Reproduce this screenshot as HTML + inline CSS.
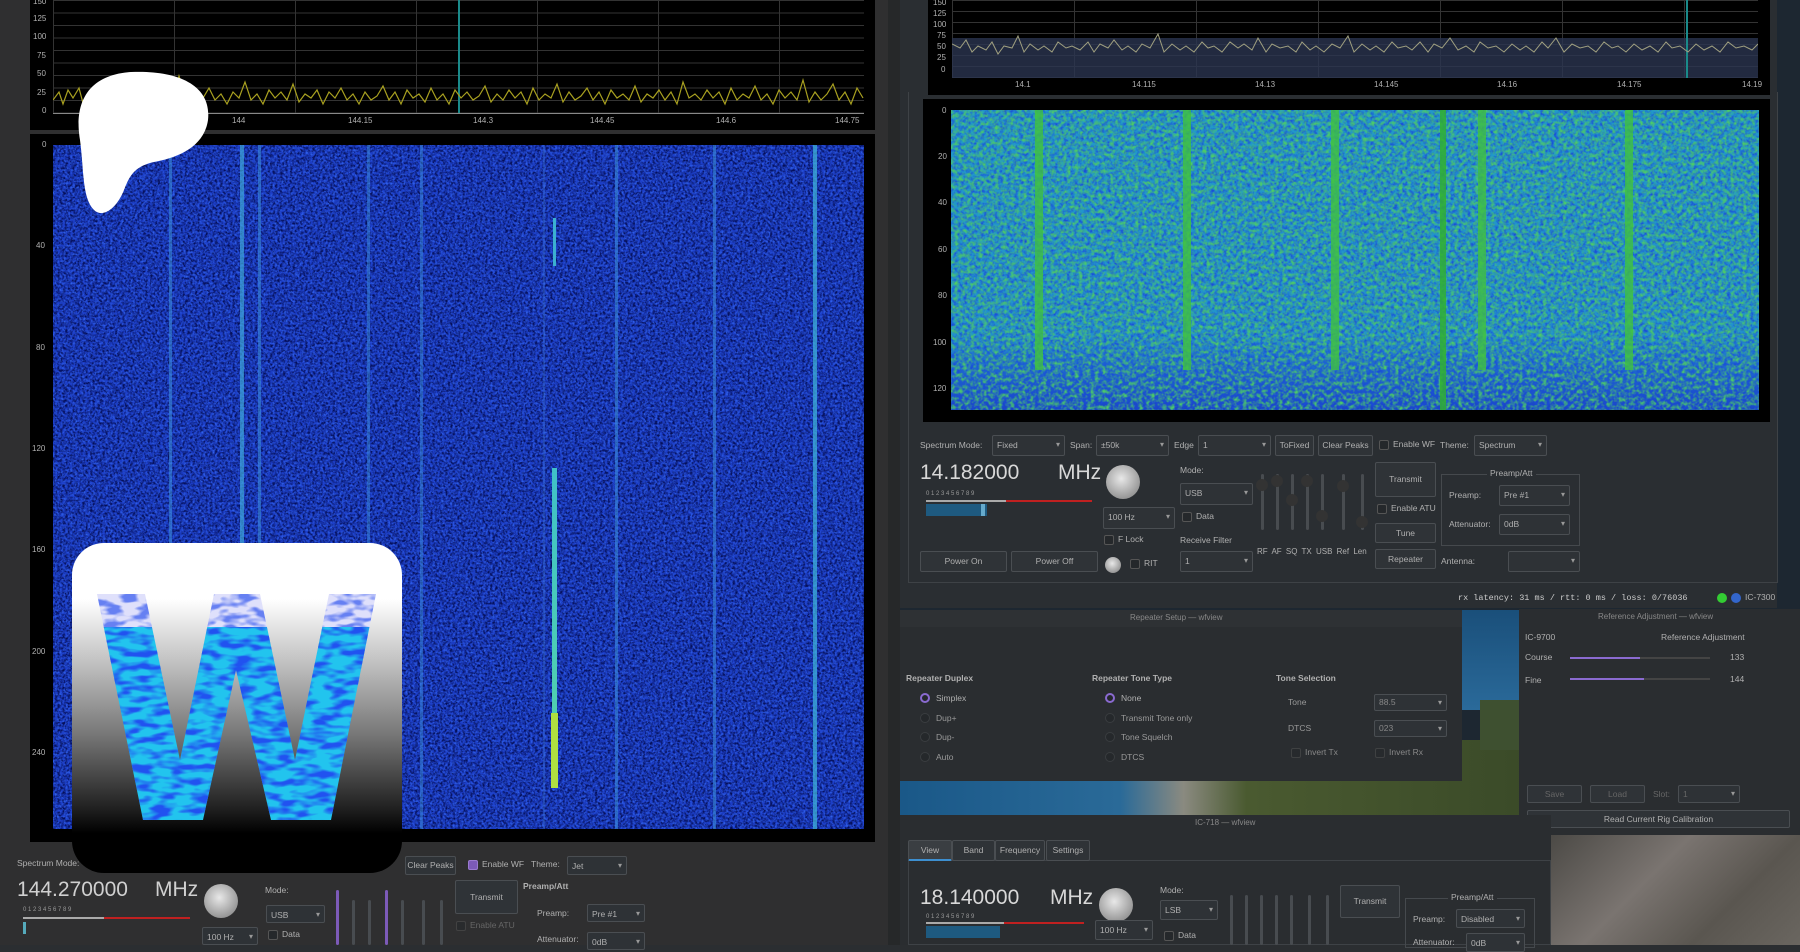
<!DOCTYPE html>
<html><head><meta charset="utf-8">
<style>
*{margin:0;padding:0;box-sizing:border-box}
body{width:1800px;height:945px;overflow:hidden;background:#2b2e31;font-family:"Liberation Sans",sans-serif;color:#c8c8c8;position:relative;font-size:9px}
.a{position:absolute}
.t{position:absolute;white-space:nowrap;font-size:9px;color:#b0b0b0}
.cb{position:absolute;border:1px solid #4a4e52;background:#2e3236;border-radius:2px;color:#b0b0b0;font-size:8.5px;padding-left:4px;line-height:18px;white-space:nowrap}
.cb:after{content:"▾";position:absolute;right:4px;top:0;font-size:8px;color:#999}
.bt{position:absolute;border:1px solid #4a4e52;background:#2f3337;border-radius:2px;color:#b0b0b0;font-size:8.5px;text-align:center;white-space:nowrap}
.chk{position:absolute;width:10px;height:10px;border:1px solid #555;background:#25282b;border-radius:2px}
.rad{position:absolute;width:10px;height:10px;border-radius:50%;background:#25282b;border:1px solid #3a3d40}
.sl{position:absolute;width:3px;background:#484c50;border-radius:2px}
.kn{position:absolute;border-radius:50%;background:radial-gradient(circle at 45% 40%,#e8e8e8,#999 70%,#777)}
.grid{background-image:linear-gradient(#333 1px,transparent 1px),linear-gradient(90deg,#333 1px,transparent 1px)}
filter{color-interpolation-filters:sRGB}
</style></head><body>
<svg width="0" height="0" style="position:absolute">
<filter id="nc1" x="0" y="0" width="100%" height="100%" color-interpolation-filters="sRGB"><feTurbulence type="fractalNoise" baseFrequency="0.3" numOctaves="2" seed="7"/><feColorMatrix type="matrix" values="0 0 0 0 0.1  0 0 0 0 0.3  0 0 0 0 0.85  2.2 0 0 0 -0.8"/></filter>
<filter id="nc2" x="0" y="0" width="100%" height="100%" color-interpolation-filters="sRGB"><feTurbulence type="fractalNoise" baseFrequency="0.25" numOctaves="2" seed="11"/><feColorMatrix type="matrix" values="0 0 0 0 0.3  0 0 0 0 0.8  0 0 0 0 0.4  2.2 0 0 0 -0.85"/></filter>
<filter id="nb" x="0" y="0" width="100%" height="100%" color-interpolation-filters="sRGB"><feTurbulence type="fractalNoise" baseFrequency="0.4" numOctaves="2" seed="3"/><feColorMatrix type="matrix" values="0 0 0 0 0.02  0 0 0 0 0.06  0 0 0 0 0.35  2.6 0 0 0 -0.9"/></filter>
<filter id="nb2" x="0" y="0" width="100%" height="100%" color-interpolation-filters="sRGB"><feTurbulence type="fractalNoise" baseFrequency="0.45" numOctaves="2" seed="21"/><feColorMatrix type="matrix" values="0 0 0 0 0.2  0 0 0 0 0.4  0 0 0 0 0.95  2.4 0 0 0 -1.1"/></filter>
</svg>

<!-- LEFT WINDOW -->
<div class="a" style="left:0;top:0;width:892px;height:945px;background:#2f2f30"></div>
<div class="a" style="left:888px;top:0;width:12px;height:945px;background:#262829"></div>
<div class="a" style="left:30px;top:0;width:845px;height:130px;background:#000"></div>
<div class="a grid" style="left:53px;top:0;width:811px;height:113px;background-size:100% 12.5px,121px 100%"></div>
<div class="a" style="left:458px;top:0;width:2px;height:113px;background:#1a8a8a"></div>
<svg class="a" style="left:53px;top:70px" width="811" height="44"><polyline fill="none" stroke="#a8a020" stroke-width="1.2" points="0,30 6,22 10,34 15,20 20,28 26,18 30,33 36,24 42,30 48,20 54,32 60,26 66,14 72,30 78,22 84,34 90,24 96,28 102,16 108,32 114,24 120,30 126,6 132,26 138,34 144,20 150,28 156,18 162,30 168,24 174,34 180,22 186,28 192,12 198,30 204,24 210,34 216,20 222,28 228,22 234,30 240,14 246,32 252,24 258,28 264,20 270,34 276,22 282,28 288,18 294,30 300,24 306,34 312,22 318,30 324,26 330,16 336,30 342,22 348,34 354,20 360,28 366,24 372,32 378,18 384,30 390,24 396,34 402,20 408,28 414,22 420,30 426,26 432,16 438,32 444,24 450,30 456,20 462,28 468,22 474,34 480,18 486,30 492,24 498,28 504,14 510,32 516,22 522,30 528,26 534,18 540,30 546,22 552,34 558,20 564,28 570,24 576,30 582,16 588,32 594,24 600,28 606,20 612,30 618,22 624,34 630,12 636,28 642,24 648,30 654,20 660,28 666,22 672,34 678,18 684,30 690,24 696,28 702,16 708,30 714,24 720,34 726,20 732,28 738,22 744,30 750,10 756,32 762,22 768,30 774,24 780,14 786,30 792,22 798,34 804,18 810,28"/></svg>
<div class="a" style="left:53px;top:113px;width:811px;height:1px;background:#888"></div>
<div class="t" style="left:33px;top:-3px;font-size:8px">150</div><div class="t" style="left:33px;top:14px;font-size:8px">125</div><div class="t" style="left:33px;top:32px;font-size:8px">100</div><div class="t" style="left:37px;top:51px;font-size:8px">75</div><div class="t" style="left:37px;top:69px;font-size:8px">50</div><div class="t" style="left:37px;top:88px;font-size:8px">25</div><div class="t" style="left:42px;top:106px;font-size:8px">0</div>
<div class="t" style="left:232px;top:116px;font-size:8px">144</div><div class="t" style="left:348px;top:116px;font-size:8px">144.15</div><div class="t" style="left:473px;top:116px;font-size:8px">144.3</div><div class="t" style="left:590px;top:116px;font-size:8px">144.45</div><div class="t" style="left:716px;top:116px;font-size:8px">144.6</div><div class="t" style="left:835px;top:116px;font-size:8px">144.75</div>
<div class="a" style="left:30px;top:134px;width:845px;height:708px;background:#000"></div>
<div class="a" style="left:53px;top:145px;width:811px;height:684px;background:#1c3ec8;overflow:hidden">
<svg width="811" height="684" style="position:absolute;left:0;top:0"><rect width="811" height="684" fill="#000" filter="url(#nb)"/><rect width="811" height="684" fill="#000" filter="url(#nb2)"/></svg>
<div class="a" style="left:116px;top:0;width:3px;height:684px;background:#3a8ad8;opacity:.6"></div>
<div class="a" style="left:187px;top:0;width:4px;height:684px;background:#3fa6d8;opacity:.7"></div>
<div class="a" style="left:205px;top:0;width:3px;height:684px;background:#3a8ad8;opacity:.6"></div>
<div class="a" style="left:314px;top:0;width:3px;height:684px;background:#3a8ad8;opacity:.5"></div>
<div class="a" style="left:367px;top:0;width:3px;height:684px;background:#3a8ad8;opacity:.5"></div>
<div class="a" style="left:490px;top:0;width:2px;height:684px;background:#3a70d8;opacity:.4"></div>
<div class="a" style="left:562px;top:0;width:3px;height:684px;background:#3a8ad8;opacity:.6"></div>
<div class="a" style="left:660px;top:0;width:3px;height:684px;background:#3a8ad8;opacity:.6"></div>
<div class="a" style="left:760px;top:0;width:4px;height:684px;background:#3fb0d8;opacity:.75"></div>
<div class="a" style="left:500px;top:73px;width:3px;height:48px;background:#3cb0d0"></div>
<div class="a" style="left:499px;top:323px;width:5px;height:245px;background:linear-gradient(#40c0c8,#50d0b0)"></div>
<div class="a" style="left:498px;top:568px;width:7px;height:75px;background:#b0e040"></div>
</div>
<div class="t" style="left:42px;top:140px;font-size:8px">0</div><div class="t" style="left:36px;top:241px;font-size:8px">40</div><div class="t" style="left:36px;top:343px;font-size:8px">80</div><div class="t" style="left:32px;top:444px;font-size:8px">120</div><div class="t" style="left:32px;top:545px;font-size:8px">160</div><div class="t" style="left:32px;top:647px;font-size:8px">200</div><div class="t" style="left:32px;top:748px;font-size:8px">240</div>
<!-- left controls -->
<div class="t" style="left:17px;top:858px;font-size:8.5px">Spectrum Mode:</div>
<div class="bt" style="left:405px;top:856px;width:51px;height:19px;line-height:17px">Clear Peaks</div>
<div class="chk" style="left:468px;top:860px;background:#7c5ab8;border-color:#9a7ad0"></div>
<div class="t" style="left:482px;top:859px;font-size:8.5px">Enable WF</div>
<div class="t" style="left:531px;top:859px;font-size:8.5px">Theme:</div>
<div class="cb" style="left:567px;top:856px;width:60px;height:19px">Jet</div>
<div class="t" style="left:17px;top:878px;font-size:21px;color:#d0d0d0">144.270000</div>
<div class="t" style="left:155px;top:878px;font-size:21px;color:#d0d0d0">MHz</div>
<div class="a" style="left:23px;top:917px;width:81px;height:2px;background:#aaa"></div>
<div class="a" style="left:104px;top:917px;width:86px;height:2px;background:#c02020"></div>
<div class="t" style="left:23px;top:907px;font-size:6px;color:#999">0 1 2 3 4 5 6 7 8 9</div>
<div class="a" style="left:23px;top:922px;width:3px;height:12px;background:#5ab"></div>
<div class="kn" style="left:204px;top:884px;width:34px;height:34px"></div>
<div class="cb" style="left:202px;top:927px;width:56px;height:18px">100 Hz</div>
<div class="t" style="left:265px;top:885px;font-size:8.5px">Mode:</div>
<div class="cb" style="left:266px;top:905px;width:59px;height:18px">USB</div>
<div class="chk" style="left:268px;top:930px"></div><div class="t" style="left:282px;top:929px;font-size:8.5px">Data</div>
<div class="sl" style="left:336px;top:890px;height:55px;background:#7c5ab8"></div>
<div class="sl" style="left:352px;top:900px;height:45px"></div>
<div class="sl" style="left:368px;top:900px;height:45px"></div>
<div class="sl" style="left:385px;top:890px;height:55px;background:#7c5ab8"></div>
<div class="sl" style="left:401px;top:900px;height:45px"></div>
<div class="sl" style="left:422px;top:900px;height:45px"></div>
<div class="sl" style="left:440px;top:900px;height:45px"></div>
<div class="bt" style="left:455px;top:880px;width:63px;height:34px;line-height:32px">Transmit</div>
<div class="chk" style="left:456px;top:921px;opacity:.5"></div><div class="t" style="left:470px;top:920px;font-size:8.5px;color:#666">Enable ATU</div>
<div class="t" style="left:523px;top:881px;font-size:8.5px;font-weight:bold">Preamp/Att</div>
<div class="t" style="left:537px;top:908px;font-size:8.5px">Preamp:</div>
<div class="cb" style="left:587px;top:904px;width:58px;height:18px">Pre #1</div>
<div class="t" style="left:537px;top:934px;font-size:8.5px">Attenuator:</div>
<div class="cb" style="left:587px;top:932px;width:58px;height:18px">0dB</div>

<!-- LOGOS -->
<svg class="a" style="left:76px;top:70px" width="136" height="148" viewBox="0 0 136 148"><path d="M4,70 C-2,35 10,5 55,2 C100,0 136,14 132,50 C128,78 100,88 78,92 C60,96 54,104 48,120 C40,140 26,148 18,140 C6,128 8,100 4,70Z" fill="#fff"/></svg>
<div class="a" style="left:72px;top:543px;width:330px;height:330px;border-radius:32px;background:linear-gradient(#fff 0%,#fff 17%,#bbb 38%,#777 58%,#222 80%,#000 88%);overflow:hidden">
<svg width="330" height="330" style="position:absolute;left:0;top:0">
<defs><clipPath id="wc"><polygon points="25,51 73,51 108,217 142,51 188,51 223,217 257,51 304,51 259,277 199,277 164,127 131,277 71,277"/></clipPath>
<filter id="wn" x="0" y="0" width="100%" height="100%" color-interpolation-filters="sRGB"><feTurbulence type="fractalNoise" baseFrequency="0.05 0.14" numOctaves="2" seed="5"/><feColorMatrix type="matrix" values="0 0 0 0 0.13  0 0 0 0 0.32  0 0 0 0 0.94  4 0 0 0 -1.7"/></filter>
<filter id="wn2" x="0" y="0" width="100%" height="100%" color-interpolation-filters="sRGB"><feTurbulence type="fractalNoise" baseFrequency="0.06 0.14" numOctaves="2" seed="9"/><feColorMatrix type="matrix" values="0 0 0 0 0.4  0 0 0 0 0.5  0 0 0 0 0.95  4 0 0 0 -1.7"/></filter></defs>
<g clip-path="url(#wc)"><rect x="0" y="51" width="330" height="33" fill="#dfe0fb"/><rect x="0" y="51" width="330" height="33" fill="#000" filter="url(#wn2)"/><rect x="0" y="84" width="330" height="200" fill="#22c4ee"/><rect x="0" y="84" width="330" height="200" fill="#000" filter="url(#wn)"/></g>
</svg></div>

<!-- RIGHT MAIN WINDOW -->
<div class="a" style="left:1777px;top:0;width:23px;height:610px;background:#1d2731"></div>
<div class="a" style="left:900px;top:0;width:877px;height:608px;background:#2a2e32"></div>
<div class="a" style="left:928px;top:0;width:842px;height:95px;background:#000"></div>
<div class="a grid" style="left:952px;top:0;width:806px;height:78px;background-size:100% 11px,122px 100%"></div>
<div class="a" style="left:952px;top:38px;width:806px;height:40px;background:#2a3450;opacity:.8"></div>
<div class="a" style="left:1686px;top:0;width:2px;height:78px;background:#1a8a8a"></div>
<svg class="a" style="left:952px;top:30px" width="806" height="48"><polyline fill="none" stroke="#a0a080" stroke-width="1" points="0,14 8,18 14,10 20,22 26,16 34,20 40,12 46,24 52,16 60,18 66,6 72,22 78,14 86,20 92,16 100,22 106,12 114,18 120,16 128,20 136,12 142,22 148,14 156,18 162,10 170,20 176,16 184,22 190,14 198,18 206,4 212,22 220,14 228,20 234,16 242,22 250,12 256,18 262,16 270,22 278,12 286,18 292,14 300,20 306,8 314,22 320,14 328,18 336,16 344,22 350,12 358,20 364,16 372,22 380,14 388,18 396,6 402,22 410,14 418,20 424,16 432,22 440,12 446,18 454,16 460,20 468,12 476,22 482,14 490,18 498,8 506,20 514,16 522,22 528,12 536,18 544,16 552,22 560,14 568,20 574,16 582,22 590,12 596,18 604,8 612,22 620,14 628,18 636,16 644,22 652,12 660,18 666,16 674,22 682,14 690,20 698,16 706,22 714,12 720,18 728,16 736,22 744,14 752,20 760,16 768,22 776,12 784,18 792,16 800,20 806,14"/></svg>
<div class="t" style="left:933px;top:-2px;font-size:8px">150</div><div class="t" style="left:933px;top:9px;font-size:8px">125</div><div class="t" style="left:933px;top:20px;font-size:8px">100</div><div class="t" style="left:937px;top:31px;font-size:8px">75</div><div class="t" style="left:937px;top:42px;font-size:8px">50</div><div class="t" style="left:937px;top:53px;font-size:8px">25</div><div class="t" style="left:941px;top:65px;font-size:8px">0</div>
<div class="t" style="left:1015px;top:80px;font-size:8px">14.1</div><div class="t" style="left:1132px;top:80px;font-size:8px">14.115</div><div class="t" style="left:1255px;top:80px;font-size:8px">14.13</div><div class="t" style="left:1374px;top:80px;font-size:8px">14.145</div><div class="t" style="left:1497px;top:80px;font-size:8px">14.16</div><div class="t" style="left:1617px;top:80px;font-size:8px">14.175</div><div class="t" style="left:1742px;top:80px;font-size:8px">14.19</div>
<div class="a" style="left:923px;top:99px;width:847px;height:323px;background:#000"></div>
<div class="a" style="left:951px;top:110px;width:808px;height:300px;overflow:hidden;background:linear-gradient(#2298c8 0%,#2292cc 75%,#1e6ad0 85%,#1a44c8 100%)">
<svg width="808" height="300" style="position:absolute;left:0;top:0"><rect width="808" height="300" filter="url(#nc1)"/><rect width="808" height="300" filter="url(#nc2)"/></svg>
<div class="a" style="left:84px;top:0;width:8px;height:260px;background:#40c040;opacity:.8"></div>
<div class="a" style="left:232px;top:0;width:8px;height:260px;background:#40c040;opacity:.8"></div>
<div class="a" style="left:380px;top:0;width:8px;height:260px;background:#40c040;opacity:.8"></div>
<div class="a" style="left:489px;top:0;width:6px;height:300px;background:#30b030;opacity:.85"></div>
<div class="a" style="left:527px;top:0;width:8px;height:260px;background:#40c040;opacity:.8"></div>
<div class="a" style="left:674px;top:0;width:8px;height:260px;background:#40c040;opacity:.8"></div>
</div>
<div class="t" style="left:942px;top:106px;font-size:8px">0</div><div class="t" style="left:938px;top:152px;font-size:8px">20</div><div class="t" style="left:938px;top:198px;font-size:8px">40</div><div class="t" style="left:938px;top:245px;font-size:8px">60</div><div class="t" style="left:938px;top:291px;font-size:8px">80</div><div class="t" style="left:933px;top:338px;font-size:8px">100</div><div class="t" style="left:933px;top:384px;font-size:8px">120</div>
<div class="a" style="left:908px;top:92px;width:870px;height:491px;border:1px solid #3e4246;border-top:none"></div>
<!-- right controls -->
<div class="t" style="left:920px;top:440px;font-size:8.5px">Spectrum Mode:</div>
<div class="cb" style="left:992px;top:435px;width:73px;height:21px">Fixed</div>
<div class="t" style="left:1070px;top:440px;font-size:8.5px">Span:</div>
<div class="cb" style="left:1096px;top:435px;width:73px;height:21px">±50k</div>
<div class="t" style="left:1174px;top:440px;font-size:8.5px">Edge</div>
<div class="cb" style="left:1198px;top:435px;width:73px;height:21px">1</div>
<div class="bt" style="left:1275px;top:435px;width:39px;height:21px;line-height:19px">ToFixed</div>
<div class="bt" style="left:1318px;top:435px;width:55px;height:21px;line-height:19px">Clear Peaks</div>
<div class="chk" style="left:1379px;top:440px"></div><div class="t" style="left:1393px;top:439px;font-size:8.5px">Enable WF</div>
<div class="t" style="left:1440px;top:440px;font-size:8.5px">Theme:</div>
<div class="cb" style="left:1474px;top:435px;width:73px;height:21px">Spectrum</div>
<div class="t" style="left:920px;top:461px;font-size:21px;color:#d8d8d8">14.182000</div>
<div class="t" style="left:1058px;top:461px;font-size:21px;color:#d8d8d8">MHz</div>
<div class="t" style="left:926px;top:491px;font-size:6px;color:#999">0 1 2 3 4 5 6 7 8 9</div>
<div class="a" style="left:926px;top:500px;width:80px;height:2px;background:#aaa"></div>
<div class="a" style="left:1006px;top:500px;width:86px;height:2px;background:#c02020"></div>
<div class="a" style="left:926px;top:504px;width:61px;height:12px;background:#1e5a80"></div>
<div class="a" style="left:981px;top:504px;width:4px;height:12px;background:#6ac"></div>
<div class="kn" style="left:1106px;top:465px;width:34px;height:34px"></div>
<div class="cb" style="left:1103px;top:507px;width:72px;height:22px">100 Hz</div>
<div class="chk" style="left:1104px;top:535px"></div><div class="t" style="left:1118px;top:534px;font-size:8.5px">F Lock</div>
<div class="kn" style="left:1105px;top:557px;width:16px;height:16px"></div>
<div class="chk" style="left:1130px;top:559px"></div><div class="t" style="left:1144px;top:558px;font-size:8.5px">RIT</div>
<div class="t" style="left:1180px;top:465px;font-size:8.5px">Mode:</div>
<div class="cb" style="left:1180px;top:483px;width:73px;height:22px">USB</div>
<div class="chk" style="left:1182px;top:512px"></div><div class="t" style="left:1196px;top:511px;font-size:8.5px">Data</div>
<div class="t" style="left:1180px;top:535px;font-size:8.5px">Receive Filter</div>
<div class="cb" style="left:1180px;top:551px;width:73px;height:21px">1</div>
<div class="bt" style="left:920px;top:551px;width:87px;height:21px;line-height:19px">Power On</div>
<div class="bt" style="left:1011px;top:551px;width:87px;height:21px;line-height:19px">Power Off</div>
<div class="sl" style="left:1261px;top:474px;height:56px"></div><div class="kn" style="left:1256px;top:479px;width:12px;height:12px;background:#333"></div>
<div class="sl" style="left:1276px;top:474px;height:56px"></div><div class="kn" style="left:1271px;top:475px;width:12px;height:12px;background:#333"></div>
<div class="sl" style="left:1291px;top:474px;height:56px"></div><div class="kn" style="left:1286px;top:494px;width:12px;height:12px;background:#333"></div>
<div class="sl" style="left:1306px;top:474px;height:56px"></div><div class="kn" style="left:1301px;top:475px;width:12px;height:12px;background:#333"></div>
<div class="sl" style="left:1321px;top:474px;height:56px"></div><div class="kn" style="left:1316px;top:510px;width:12px;height:12px;background:#333"></div>
<div class="sl" style="left:1342px;top:474px;height:56px"></div><div class="kn" style="left:1337px;top:480px;width:12px;height:12px;background:#333"></div>
<div class="sl" style="left:1361px;top:474px;height:56px"></div><div class="kn" style="left:1356px;top:516px;width:12px;height:12px;background:#333"></div>
<div class="t" style="left:1257px;top:547px;font-size:8px;word-spacing:2px">RF AF SQ TX USB Ref Len</div>
<div class="bt" style="left:1375px;top:462px;width:61px;height:35px;line-height:33px">Transmit</div>
<div class="chk" style="left:1377px;top:504px"></div><div class="t" style="left:1391px;top:503px;font-size:8.5px">Enable ATU</div>
<div class="bt" style="left:1375px;top:523px;width:61px;height:20px;line-height:18px">Tune</div>
<div class="bt" style="left:1375px;top:549px;width:61px;height:20px;line-height:18px">Repeater</div>
<div class="a" style="left:1441px;top:474px;width:139px;height:72px;border:1px solid #45494d"></div>
<div class="t" style="left:1487px;top:468px;font-size:8.5px;background:#2a2e32;padding:0 3px">Preamp/Att</div>
<div class="t" style="left:1449px;top:490px;font-size:8.5px">Preamp:</div>
<div class="cb" style="left:1499px;top:485px;width:71px;height:21px">Pre #1</div>
<div class="t" style="left:1449px;top:519px;font-size:8.5px">Attenuator:</div>
<div class="cb" style="left:1499px;top:514px;width:71px;height:21px">0dB</div>
<div class="t" style="left:1441px;top:556px;font-size:8.5px">Antenna:</div>
<div class="cb" style="left:1508px;top:551px;width:72px;height:21px"></div>
<div class="t" style="left:1458px;top:593px;font-family:'Liberation Mono',monospace;font-size:8.5px;color:#ccc">rx latency:  31 ms / rtt:   0 ms / loss:   0/76036</div>
<div class="a" style="left:1717px;top:593px;width:10px;height:10px;border-radius:50%;background:#3c3"></div>
<div class="a" style="left:1731px;top:593px;width:10px;height:10px;border-radius:50%;background:#36c"></div>
<div class="t" style="left:1745px;top:592px;font-size:8.5px">IC-7300</div>

<!-- desktop wallpaper bits -->
<div class="a" style="left:900px;top:608px;width:900px;height:337px;background:#1d2731"></div>
<div class="a" style="left:1440px;top:610px;width:90px;height:100px;background:linear-gradient(#1a4f7a,#2a6a9a)"></div>
<div class="a" style="left:900px;top:740px;width:630px;height:78px;background:linear-gradient(90deg,#1a5888 0%,#2a6a98 35%,#8a8a80 45%,#4a5a30 55%,#3a4a28 100%)"></div>
<div class="a" style="left:1480px;top:700px;width:60px;height:50px;background:#3e5030"></div>
<div class="a" style="left:1551px;top:830px;width:249px;height:115px;background:linear-gradient(135deg,#4a4844,#7a7470 40%,#5a5650 70%,#6a6660)"></div>

<!-- Repeater dialog -->
<div class="a" style="left:900px;top:610px;width:562px;height:171px;background:#2a2d30"></div>
<div class="a" style="left:900px;top:610px;width:562px;height:17px;background:#2e3134"></div>
<div class="t" style="left:1130px;top:613px;font-size:8px;color:#888">Repeater Setup — wfview</div>
<div class="t" style="left:906px;top:673px;font-size:8.5px;font-weight:bold">Repeater Duplex</div>
<div class="rad" style="left:920px;top:693px;border:2px solid #8a6ad0"></div><div class="t" style="left:936px;top:693px;font-size:8.5px">Simplex</div>
<div class="rad" style="left:920px;top:713px"></div><div class="t" style="left:936px;top:713px;font-size:8.5px;color:#999">Dup+</div>
<div class="rad" style="left:920px;top:732px"></div><div class="t" style="left:936px;top:732px;font-size:8.5px;color:#999">Dup-</div>
<div class="rad" style="left:920px;top:752px"></div><div class="t" style="left:936px;top:752px;font-size:8.5px;color:#999">Auto</div>
<div class="t" style="left:1092px;top:673px;font-size:8.5px;font-weight:bold">Repeater Tone Type</div>
<div class="rad" style="left:1105px;top:693px;border:2px solid #8a6ad0"></div><div class="t" style="left:1121px;top:693px;font-size:8.5px">None</div>
<div class="rad" style="left:1105px;top:713px"></div><div class="t" style="left:1121px;top:713px;font-size:8.5px;color:#999">Transmit Tone only</div>
<div class="rad" style="left:1105px;top:732px"></div><div class="t" style="left:1121px;top:732px;font-size:8.5px;color:#999">Tone Squelch</div>
<div class="rad" style="left:1105px;top:752px"></div><div class="t" style="left:1121px;top:752px;font-size:8.5px;color:#999">DTCS</div>
<div class="t" style="left:1276px;top:673px;font-size:8.5px;font-weight:bold">Tone Selection</div>
<div class="t" style="left:1288px;top:697px;font-size:8.5px;color:#999">Tone</div>
<div class="cb" style="left:1374px;top:694px;width:73px;height:17px;line-height:15px;color:#888">88.5</div>
<div class="t" style="left:1288px;top:723px;font-size:8.5px;color:#999">DTCS</div>
<div class="cb" style="left:1374px;top:720px;width:73px;height:17px;line-height:15px;color:#888">023</div>
<div class="chk" style="left:1291px;top:748px;opacity:.5"></div><div class="t" style="left:1305px;top:747px;font-size:8.5px;color:#888">Invert Tx</div>
<div class="chk" style="left:1375px;top:748px;opacity:.5"></div><div class="t" style="left:1389px;top:747px;font-size:8.5px;color:#888">Invert Rx</div>

<!-- Reference Adjustment dialog -->
<div class="a" style="left:1519px;top:609px;width:281px;height:226px;background:#2a2d30"></div>
<div class="t" style="left:1598px;top:612px;font-size:8px;color:#888">Reference Adjustment — wfview</div>
<div class="t" style="left:1525px;top:632px;font-size:8.5px">IC-9700</div>
<div class="t" style="left:1661px;top:632px;font-size:8.5px">Reference Adjustment</div>
<div class="t" style="left:1525px;top:652px;font-size:8.5px">Course</div>
<div class="a" style="left:1570px;top:657px;width:140px;height:2px;background:#444"></div><div class="a" style="left:1570px;top:657px;width:70px;height:2px;background:#8a6ad0"></div>
<div class="t" style="left:1730px;top:652px;font-size:8.5px">133</div>
<div class="t" style="left:1525px;top:675px;font-size:8.5px">Fine</div>
<div class="a" style="left:1570px;top:678px;width:140px;height:2px;background:#444"></div><div class="a" style="left:1570px;top:678px;width:74px;height:2px;background:#8a6ad0"></div>
<div class="t" style="left:1730px;top:674px;font-size:8.5px">144</div>
<div class="bt" style="left:1527px;top:785px;width:55px;height:18px;line-height:16px;color:#666">Save</div>
<div class="bt" style="left:1590px;top:785px;width:55px;height:18px;line-height:16px;color:#666">Load</div>
<div class="t" style="left:1653px;top:789px;font-size:8.5px;color:#666">Slot:</div>
<div class="cb" style="left:1678px;top:785px;width:62px;height:18px;line-height:16px;color:#666">1</div>
<div class="bt" style="left:1527px;top:810px;width:263px;height:18px;line-height:16px">Read Current Rig Calibration</div>

<!-- IC-718 window -->
<div class="a" style="left:900px;top:815px;width:651px;height:130px;background:#2a2d30"></div>
<div class="t" style="left:1195px;top:818px;font-size:8px;color:#888">IC-718 — wfview</div>
<div class="a" style="left:908px;top:860px;width:643px;height:85px;border:1px solid #3e4246"></div>
<div class="bt" style="left:908px;top:840px;width:44px;height:21px;line-height:18px;background:#3a3e42;border-bottom:2px solid #3d8fd0">View</div>
<div class="bt" style="left:952px;top:840px;width:43px;height:21px;line-height:19px">Band</div>
<div class="bt" style="left:995px;top:840px;width:50px;height:21px;line-height:19px">Frequency</div>
<div class="bt" style="left:1046px;top:840px;width:44px;height:21px;line-height:19px">Settings</div>
<div class="t" style="left:920px;top:886px;font-size:21px;color:#d8d8d8">18.140000</div>
<div class="t" style="left:1050px;top:886px;font-size:21px;color:#d8d8d8">MHz</div>
<div class="t" style="left:926px;top:914px;font-size:6px;color:#999">0 1 2 3 4 5 6 7 8 9</div>
<div class="a" style="left:926px;top:922px;width:78px;height:2px;background:#aaa"></div>
<div class="a" style="left:1004px;top:922px;width:80px;height:2px;background:#c02020"></div>
<div class="a" style="left:926px;top:926px;width:74px;height:12px;background:#1e5a80"></div>
<div class="kn" style="left:1099px;top:888px;width:34px;height:34px"></div>
<div class="t" style="left:1160px;top:885px;font-size:8.5px">Mode:</div>
<div class="cb" style="left:1160px;top:900px;width:58px;height:20px">LSB</div>
<div class="cb" style="left:1095px;top:920px;width:58px;height:20px">100 Hz</div>
<div class="chk" style="left:1164px;top:931px"></div><div class="t" style="left:1178px;top:930px;font-size:8.5px">Data</div>
<div class="sl" style="left:1230px;top:895px;height:50px"></div><div class="sl" style="left:1245px;top:895px;height:50px"></div><div class="sl" style="left:1260px;top:895px;height:50px"></div><div class="sl" style="left:1275px;top:895px;height:50px"></div><div class="sl" style="left:1290px;top:895px;height:50px"></div><div class="sl" style="left:1308px;top:895px;height:50px"></div><div class="sl" style="left:1326px;top:895px;height:50px"></div>
<div class="bt" style="left:1340px;top:885px;width:60px;height:33px;line-height:31px">Transmit</div>
<div class="a" style="left:1405px;top:898px;width:130px;height:50px;border:1px solid #45494d"></div>
<div class="t" style="left:1448px;top:892px;font-size:8.5px;background:#2a2d30;padding:0 3px">Preamp/Att</div>
<div class="t" style="left:1413px;top:914px;font-size:8.5px">Preamp:</div>
<div class="cb" style="left:1456px;top:909px;width:69px;height:19px">Disabled</div>
<div class="t" style="left:1413px;top:937px;font-size:8.5px">Attenuator:</div>
<div class="cb" style="left:1466px;top:933px;width:59px;height:19px">0dB</div>
</body></html>
